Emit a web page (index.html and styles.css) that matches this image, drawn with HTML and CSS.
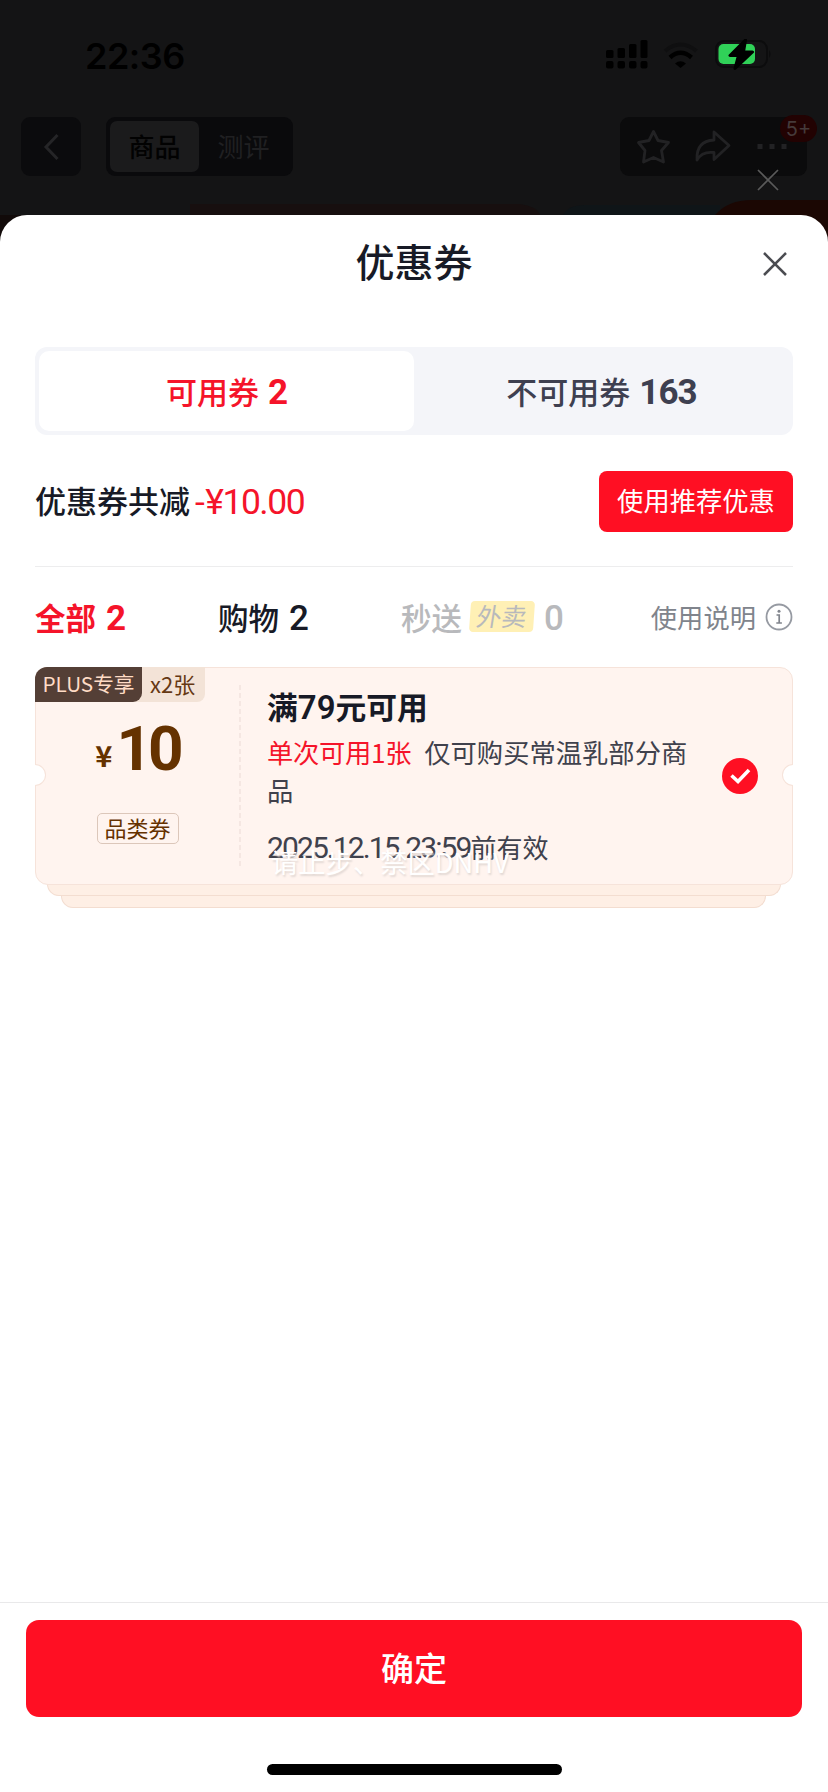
FILE: index.html
```
<!DOCTYPE html>
<html lang="zh-CN">
<head>
<meta charset="utf-8">
<title>优惠券</title>
<link rel="stylesheet" href="styles.css">
</head>
<body>
<div class="screen">
  <div class="backdrop">
    <div class="status">
      <span class="clock">22:36</span>
      <svg class="status-icons" width="170" height="32" viewBox="0 0 170 32">
        <g fill="#000">
          <rect x="1" y="11" width="7.500" height="8" rx="1.500"/><rect x="12.500" y="9" width="7.500" height="10" rx="1.500"/><rect x="24" y="5" width="7.500" height="14" rx="1.500"/><rect x="35.500" y="1" width="7" height="18" rx="1.500"/>
          <rect x="1" y="22" width="7.500" height="7.500" rx="2"/><rect x="12.500" y="22" width="7.500" height="7.500" rx="2"/><rect x="24" y="22" width="7.500" height="7.500" rx="2"/><rect x="35.500" y="22" width="7" height="7.500" rx="2"/>
          <path d="M70 24.500Q75.500 20 81 24.500L75.500 29Z"/>
        </g>
        <path d="M65 18.500Q75.500 9 86.500 18.500" fill="none" stroke="#000" stroke-width="4.500"/>
        <path d="M60 12Q75.500 -1 91.500 12" fill="none" stroke="#0f0f10" stroke-width="4"/>
        <rect x="111" y="2" width="51" height="26" rx="8" fill="none" stroke="#0c0c0d" stroke-width="2"/>
        <path d="M164 11q3 4 0 8z" fill="#0c0c0d"/>
        <rect x="113.500" y="5" width="36.500" height="20" rx="5" fill="#30d158"/>
        <path d="M140.500 1L125 16.500h8.500L130 29.500 147.500 13h-9Z" fill="#000" stroke="#000" stroke-width="3" stroke-linejoin="round"/>
      </svg>
    </div>
    <div class="nav">
      <div class="back"><svg width="60" height="59" viewBox="0 0 60 59"><path d="M36.500 18L25 30l11.500 12" fill="none" stroke="#252527" stroke-width="3"/></svg></div>
      <div class="nav-tabs"><span class="nav-tab nav-tab-on">商品</span><span class="nav-tab">测评</span></div>
      <div class="tools">
        <svg width="187" height="59" viewBox="0 0 187 59">
          <g fill="none" stroke="#222224" stroke-width="2.800" stroke-linejoin="round">
            <path d="M33.500 14.500L38 23.500 48.500 25.500 41.500 33.500 43.500 45 33.500 40.500 23.500 45 25 33.500 18.500 25.500 29 23.500Z"/>
            <path d="M94 15L109 28.500 94 42.500V35.500Q82 34 77 43 76 24 94 23Z"/>
          </g>
          <g fill="#222224"><rect x="137.500" y="27" width="5" height="5"/><rect x="149.500" y="27" width="5" height="5"/><rect x="161.500" y="27" width="5" height="5"/></g>
        </svg>
        <span class="badge">5+</span>
      </div>
    </div>
    <svg class="page-peek" width="828" height="40" viewBox="0 0 828 40">
      <path d="M190 4H520Q535 6 540 14V20H190Z" fill="#170f0f"/>
      <path d="M563 15Q568 5 585 5H720V20H563Z" fill="#0f1518"/>
      <path d="M0 15H828V40H0Z" fill="#110a09"/>
      <path d="M715 15Q728 0 752 0H828V40H715Z" fill="#1b0703"/>
    </svg>
    <svg class="mask-close" width="24" height="24" viewBox="0 0 24 24"><path d="M2 2L22 22M22 2L2 22" stroke="#5a5a5a" stroke-width="1.700"/></svg>
  </div>

  <div class="sheet">
    <div class="head">
      <h1>优惠券</h1>
      <svg class="close" width="24" height="24" viewBox="0 0 24 24"><path d="M1 1L23 23M23 1L1 23" stroke="#4b4c51" stroke-width="2.500"/></svg>
    </div>
    <div class="content">
      <div class="segment">
        <div class="seg seg-on">可用券<b>2</b></div>
        <div class="seg">不可用券<b>163</b></div>
      </div>
      <div class="summary">
        <span class="sum-label">优惠券共减</span><span class="sum-value"><span class="minus">-</span>¥10.00</span>
        <span class="recommend">使用推荐优惠</span>
      </div>
      <div class="filters">
        <span class="filter filter-on">全部<b>2</b></span>
        <span class="filter">购物<b>2</b></span>
        <span class="filter filter-off">秒送<span class="takeout"><em>外卖</em></span><b>0</b></span>
        <span class="help">使用说明
          <svg width="28" height="28" viewBox="0 0 28 28"><circle cx="14" cy="14" r="12.500" fill="none" stroke="#969aa2" stroke-width="1.800"/><circle cx="14" cy="8.300" r="1.500" fill="#80848c"/><path d="M11.500 12h2.700v8M11.300 20h5.600" fill="none" stroke="#80848c" stroke-width="1.700"/></svg>
        </span>
      </div>
      <div class="coupon-stack">
        <div class="coupon">
          <div class="ribbon"><span class="plus">PLUS专享</span><span class="count">x2张</span></div>
          <div class="worth">
            <div class="price"><span class="yen">¥</span><span class="amount">10</span></div>
            <span class="kind">品类券</span>
          </div>
          <svg class="perforation" width="2" height="182" viewBox="0 0 2 182"><path d="M1 0V182" stroke="#f0e0da" stroke-width="1.300" stroke-dasharray="5 3"/></svg>
          <div class="detail">
            <h2>满<span class="threshold">79</span>元可用</h2>
            <p class="rule"><span class="limit">单次可用1张</span>仅可购买常温乳部分商品</p>
            <p class="expiry"><span class="date">2025.12.15 23:59</span>前有效</p>
            <span class="floating">请止步、禁区DNHV</span>
          </div>
          <svg class="check" width="38" height="38" viewBox="0 0 38 38"><circle cx="19" cy="19" r="18" fill="#ff0f23"/><path d="M10.500 18.500L17 24.500 28 13" fill="none" stroke="#fff" stroke-width="3.600"/></svg>
          <span class="notch notch-left"></span><span class="notch notch-right"></span>
        </div>
        <div class="layer layer-mid"></div>
        <div class="layer layer-back"></div>
      </div>
    </div>
    <div class="footer">
      <div class="confirm">确定</div>
      <div class="home-bar"></div>
    </div>
  </div>
</div>
</body>
</html>
```
FILE: styles.css
```
* { box-sizing: border-box; }
body { margin: 0; font-family: "Noto Sans CJK SC", sans-serif; color: #171a26; }
h1, h2, p { margin: 0; }
svg { display: block; flex: none; }
.screen { width: 828px; height: 1792px; display: flex; flex-direction: column; overflow: hidden; background: #141415; }

.backdrop { position: relative; height: 215px; flex: none; }
.status { height: 117px; padding: 39px 53px 0 85px; display: flex; justify-content: space-between; }
.clock { font: 600 36px/34px Inter, sans-serif; color: #000; letter-spacing: -.5px; }
.nav { height: 59px; padding: 0 21px; display: flex; }
.back { width: 60px; background: #0b0b0d; border-radius: 9px; }
.nav-tabs { width: 187px; margin-left: 25px; padding: 4px; display: flex; background: #0a0a0c; border-radius: 9px; }
.nav-tab { width: 89px; line-height: 49px; font-size: 26px; text-align: center; color: #202022; }
.nav-tab-on { background: #1b1b1c; color: #020202; border-radius: 7px; font-weight: 500; }
.tools { position: relative; width: 187px; margin-left: auto; background: #0b0b0c; border-radius: 9px; }
.badge { position: absolute; left: 160px; top: -2px; width: 37px; height: 27px; border-radius: 14px; background: #220202; color: #453a3a; font: 20px/29px Inter, sans-serif; text-align: center; }
.page-peek { position: absolute; left: 0; top: 200px; }
.mask-close { position: absolute; left: 756px; top: 168px; }

.sheet { position: relative; flex: 1; display: flex; flex-direction: column; background: #fff; border-radius: 27px 27px 0 0; }
.head { position: relative; height: 132px; }
h1 { font-size: 39px; font-weight: 500; line-height: 91px; text-align: center; }
.close { position: absolute; right: 41px; top: 37px; }
.content { flex: 1; padding: 0 35px; }
.segment { height: 88px; padding: 4px; display: flex; background: #f4f5f9; border-radius: 12px; }
.seg { flex: 1; display: flex; justify-content: center; align-items: center; font-size: 31px; font-weight: 500; line-height: 78px; padding-bottom: 1px; color: #3e4050; }
.seg b { margin-left: 9px; padding-top: 5px; font: 700 35px/40px Roboto, sans-serif; letter-spacing: -.9px; }
.seg-on { background: #fff; color: #f5142a; border-radius: 10px; }
.summary { height: 132px; display: flex; align-items: center; border-bottom: 1px solid #ededee; }
.sum-label { font-size: 31px; font-weight: 500; line-height: 38px; padding-bottom: 2px; }
.sum-value { margin-left: 5px; padding-top: 3px; font: 400 35.500px/40px Roboto, sans-serif; color: #f5142a; letter-spacing: -1.500px; }
.minus { margin-right: 2px; }
.recommend { width: 194px; height: 61px; margin: 2px 0 0 auto; border-radius: 8px; background: #ff0f23; color: #fff; font-size: 26.300px; line-height: 58px; text-align: center; }
.filters { height: 100px; display: flex; align-items: center; font-size: 30.500px; line-height: 40px; padding-bottom: 1px; }
.filter { width: 183px; display: flex; align-items: center; font-weight: 500; white-space: nowrap; }
.filter b { margin-left: 10px; padding-top: 4px; font: 500 35px/40px Roboto, sans-serif; }
.filter-on, .filter-on b { color: #f5142a; font-weight: 700; }
.filter-off { color: #b8b9bc; }
.takeout { width: 64px; height: 31px; margin-left: 8px; border-radius: 4px; background: #fff0b5; transform: skewX(-4deg); font-size: 25px; font-weight: 400; line-height: 28px; text-align: center; }
.takeout em { font-style: normal; display: inline-block; transform: skewX(-5deg); }
.help { margin-left: auto; display: flex; align-items: center; gap: 9px; font-size: 26.300px; line-height: 38px; color: #80848c; }

.coupon { position: relative; z-index: 2; height: 218px; display: flex; align-items: center; background: #fff4ef; border: 1px solid #f6e3da; border-radius: 13px; }
.ribbon { position: absolute; left: -1px; top: -1px; height: 35px; display: flex; background: #f3e3d7; border-radius: 12px 0 8px 0; line-height: 33px; }
.plus { width: 107px; background: #543f36; color: #ffdcc6; border-radius: 12px 0 9px 0; font-size: 20.700px; text-align: center; }
.count { width: 63px; font-size: 22px; color: #653813; padding-left: 8px; }
.worth { width: 203px; height: 216px; padding: 41px 0 0; display: flex; flex-direction: column; align-items: center; color: #653200; }
.price { height: 80px; display: flex; align-items: baseline; font-weight: 700; line-height: 74px; }
.yen { position: relative; top: -3px; font-size: 29px; margin-right: 4px; }
.amount { font: 700 62px/80px Roboto, sans-serif; letter-spacing: -4px; }
.kind { margin-top: 24px; width: 82px; height: 31px; border: 1px solid #dcc7ba; border-radius: 5px; font-size: 22px; line-height: 27px; text-align: center; }
.detail { position: relative; height: 216px; width: 430px; margin-left: 26px; }
h2 { margin-top: 17px; font-size: 30.800px; font-weight: 700; line-height: 42px; }
.threshold { font-family: Roboto, sans-serif; font-size: 33px; font-weight: 600; line-height: 1; }
.rule { margin-top: 6px; font-size: 26.300px; line-height: 38px; color: #40414c; }
.limit { margin-right: 13px; color: #f5142a; letter-spacing: -.3px; }
.expiry { margin-top: 18px; font-size: 26px; line-height: 40px; color: #40414c; white-space: nowrap; }
.date { font: 400 30px/1 Roboto, sans-serif; letter-spacing: -1.900px; word-spacing: 1px; }
.floating { position: absolute; left: 4px; top: 175px; font-size: 27.300px; line-height: 36px; color: #fff; text-shadow: 1px 2px 2px #e2d8d4; white-space: nowrap; }
.check { margin-left: 24px; }
.notch { position: absolute; top: 96px; width: 11px; height: 22px; background: #fff; border: 1px solid #f6e3da; }
.notch-left { left: -1px; border-left: 0; border-radius: 0 11px 11px 0; }
.notch-right { right: -1px; border-right: 0; border-radius: 11px 0 0 11px; }
.layer { height: 12px; background: #feefe5; border: 1px solid #f3ddd0; border-top: 0; border-radius: 0 0 13px 13px; }
.layer-mid { margin: -1px 12px 0; }
.layer-back { margin: 0 27px 0 26px; }

.footer { height: 190px; padding: 17px 26px 0; border-top: 1px solid #e9e9ea; display: flex; flex-direction: column; align-items: center; }
.confirm { width: 776px; height: 97px; border-radius: 13px; background: #ff0f23; color: #fff; font-size: 33px; font-weight: 500; line-height: 95px; text-align: center; }
.home-bar { width: 295px; height: 11px; margin-top: 47px; border-radius: 6px; background: #000; }
```
